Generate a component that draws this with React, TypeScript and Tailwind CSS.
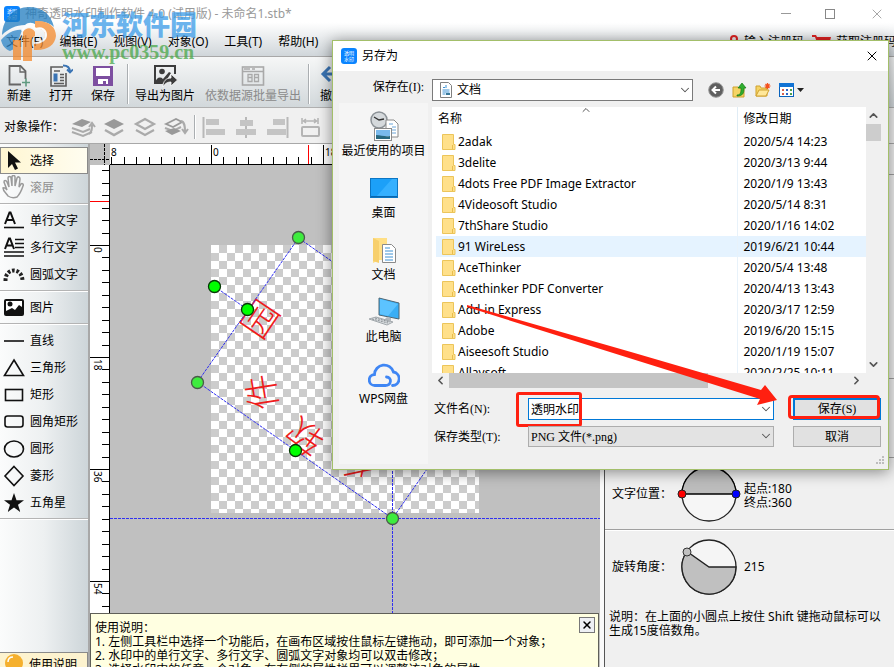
import React, { useState } from 'react';
import { ChevronDown, ChevronLeft, ChevronRight, ChevronUp, X } from 'lucide-react';

const files = [
  { name: '2adak', date: '2020/5/4 14:23' },
  { name: '3delite', date: '2020/3/13 9:44' },
  { name: '4dots Free PDF Image Extractor', date: '2020/1/9 13:43' },
  { name: '4Videosoft Studio', date: '2020/5/14 8:31' },
  { name: '7thShare Studio', date: '2020/1/16 14:02' },
  { name: '91 WireLess', date: '2019/6/21 10:44' },
  { name: 'AceThinker', date: '2020/5/4 13:48' },
  { name: 'Acethinker PDF Converter', date: '2020/4/13 13:43' },
  { name: 'Add-in Express', date: '2020/3/17 12:59' },
  { name: 'Adobe', date: '2019/6/20 15:15' },
  { name: 'Aiseesoft Studio', date: '2020/1/19 15:07' },
  { name: 'Allavsoft', date: '2020/2/25 10:11' },
];

const menus = ['文件(F)', '编辑(E)', '视图(V)', '对象(O)', '工具(T)', '帮助(H)'];

const AppLogo = () => (
  <span className="w-4 h-4 shrink-0 rounded-[3px] bg-[#0a84ff] flex items-center justify-center" aria-hidden="true">
    <svg width="16" height="16" viewBox="0 0 16 16" fill="#fff" fontSize="5" fontFamily="Noto Sans CJK SC, sans-serif">
      <text x="3" y="7">透明</text>
      <text x="3" y="13">水印</text>
    </svg>
  </span>
);

const Folder = () => (
  <svg className="shrink-0" width="14" height="16" viewBox="0 0 14 16">
    <path d="M.5.500h11v10h1.500v5H.5z" fill="#ffe08a" stroke="#ecc55a" />
    <path d="M10.500 15v-4" fill="none" stroke="#e8bd4c" />
  </svg>
);

/* ---------- toolbar ---------- */

const NewIcon = () => (
  <svg width="24" height="24" viewBox="0 0 24 24" fill="none" stroke="#666" strokeWidth="1.800">
    <path d="M14 20.500H2.500V2h11l5 5v8" />
    <path d="M13 2v6h6" strokeWidth="1.300" />
    <path d="M19 14.500v8M15 18.500h8" stroke="#5f9a80" strokeWidth="1.600" />
  </svg>
);

const OpenIcon = () => (
  <svg width="24" height="24" viewBox="0 0 24 24" fill="none" stroke="#5c5c5c" strokeWidth="1.600">
    <path d="M14 3H2v19h15V9" />
    <path d="M5 7h6M11 10.500h4M11 13.500h4M11 16.500h4M5 19.500h10" strokeWidth="1.400" />
    <path d="M4.500 9.500h4v8h-4z" fill="#3a74b4" stroke="none" />
    <path d="M14 1.500c5 0 7 2 7 6.500M18 5.500l3 3 3-3" stroke="#3a74b4" strokeWidth="1.800" />
  </svg>
);

const SaveIcon = () => (
  <svg width="22" height="24" viewBox="0 0 22 24">
    <path d="M1 2h20v20H1z" fill="#7d4fa0" />
    <path d="M4 4h14v8H4zM6 15h10v5H6z" fill="#fff" />
    <path d="M11 17h3v3h-3z" fill="#7d4fa0" />
  </svg>
);

const ExportIcon = () => (
  <svg width="26" height="24" viewBox="0 0 26 24">
    <path d="M10 19H3V2h20v8" fill="none" stroke="#3c3c3c" strokeWidth="2" />
    <circle cx="10" cy="7.500" r="2.800" fill="#3c3c3c" />
    <path d="M3 19c1-5 5-7 8-4l6-7 2 1-7 11z" fill="#3c3c3c" />
    <path d="M11 23c0-6 3-9 8-9v-4l6.500 6-6.500 6v-4c-3 0-6 1-8 5z" fill="#3c3c3c" stroke="#fff" strokeWidth=".8" />
  </svg>
);

const BatchIcon = () => (
  <svg width="24" height="24" viewBox="0 0 24 24" fill="none" stroke="#a9a9a9">
    <rect x="1.500" y="3" width="21" height="18" strokeWidth="1.600" />
    <path d="M2 7.500h20M3 5h6M11 5h3" strokeWidth="1.400" />
    <path d="M7 10.500h4v3H7zM7 13.500h4v4H7zM13.500 10.500h4v3h-4zM13.500 13.500h4v4h-4z" strokeWidth="1.300" />
  </svg>
);

const UndoIcon = () => (
  <svg width="24" height="24" viewBox="0 0 24 24" fill="none" stroke="#3a74b4" strokeWidth="3">
    <path d="M10 3l-7 7 7 7M3 10h19" />
  </svg>
);

const ToolButton = ({ icon, label, disabled }: { icon: React.ReactNode; label: string; disabled?: boolean }) => (
  <button
    disabled={disabled}
    className="flex flex-col items-center shrink-0 whitespace-nowrap leading-4 disabled:text-[#8a8a8a]"
  >
    {icon}
    <span>{label}</span>
  </button>
);

const Divider = ({ className }: { className: string }) => (
  <span className={`w-[2px] shrink-0 bg-[#aaaeb1] border-r border-white ${className}`} />
);

const layerIcons = [
  <g key="a">
    <path d="M2 17l11 4 9-4" fill="none" stroke="#aaa" strokeWidth="2" />
    <path d="M2 13l11 4 7-3" fill="none" stroke="#aaa" strokeWidth="2" />
    <path d="M2 9l10-5 9 3-9 5z" fill="#999" />
    <path d="M19 19c3-2 3-5 3-9M19 12l3-4 3 4" fill="none" stroke="#aaa" strokeWidth="2" />
  </g>,
  <g key="b">
    <path d="M3 9l10-5 10 5-10 5z" fill="#999" />
    <path d="M4 15l9 5 9-5" fill="none" stroke="#aaa" strokeWidth="2.500" />
  </g>,
  <g key="c" fill="none" stroke="#aaa" strokeWidth="2.200">
    <path d="M4 9l9-5 9 5-9 5z" />
    <path d="M4 15l9 5 9-5" />
  </g>,
  <g key="d">
    <path d="M3 9l10-5 6 3-9 5z" fill="none" stroke="#999" strokeWidth="1.800" />
    <path d="M2 13l8 3 8-4" fill="none" stroke="#aaa" strokeWidth="2" />
    <path d="M2 16l9-3 7 3-9 4z" fill="#999" />
    <path d="M18 6c4 1 4 6 4 11M19 14l3 4 3-4" fill="none" stroke="#aaa" strokeWidth="2" />
  </g>,
];

const alignIcons = [
  <g key="a">
    <path d="M2.500 2v21" stroke="#b8b8b8" strokeWidth="2" />
    <path d="M5 4h13v6H5zM5 14h19v6H5z" fill="#c4c4c4" />
  </g>,
  <g key="b">
    <path d="M13 2v21" stroke="#b8b8b8" strokeWidth="2" />
    <path d="M7 5h13v6H7zM3 14h20v6H3z" fill="#c4c4c4" />
  </g>,
  <g key="c">
    <path d="M22.500 2v21" stroke="#b8b8b8" strokeWidth="2" />
    <path d="M8 4h12v6H8zM2 14h19v6H2z" fill="#c4c4c4" />
  </g>,
  <g key="d" fill="none" stroke="#b4b4b4" strokeWidth="1.500">
    <path d="M5 3v6M21 3v6M6 6h14M9 4L6.500 6 9 8M17 4l2.500 2L17 8" />
    <rect x="5" y="12" width="17" height="9" rx="1" strokeWidth="2" />
  </g>,
];

/* ---------- tool box on the left ---------- */

const stroke = { fill: 'none', stroke: '#111', strokeWidth: 1.6 };

const toolGroups = [
  [
    { label: '选择', art: <path d="M7 3v17l4-4 3 6 3-1.500-3-6h6z" fill="#111" /> },
    {
      label: '滚屏',
      art: (
        <path
          d="M7 21c-2-3-5-5-5-8 2-1 3 1 4 2L3 7c0-2 2-2 3 0l2 5L7 3c0-2 3-2 3 0l1 8V2c0-2 3-2 3 0v9l2-8c1-2 3-1 3 1l-1 8 2-3c1-1 3 0 2 2-1 3-3 8-6 11-3 1-6 1-9-1z"
          fill="none"
          stroke="#9a9a9a"
          strokeWidth="1.500"
        />
      ),
    },
  ],
  [
    {
      label: '单行文字',
      art: (
        <g {...stroke}>
          <path d="M4 16L8.500 4.500h1L14 16M6 12h6" strokeWidth="2" />
          <path d="M3 19.500h20" />
        </g>
      ),
    },
    {
      label: '多行文字',
      art: (
        <g {...stroke}>
          <path d="M4 14L8 3.500h1L13 14M6 10.500h5" strokeWidth="2" />
          <path d="M14 4.500h9M14 8.500h9M14 12.500h9M3 17h20M3 21h20" />
        </g>
      ),
    },
    {
      label: '圆弧文字',
      art: (
        <path
          d="M4.500 19C4 5 21.500 5 21.500 19"
          fill="none"
          stroke="#222"
          strokeWidth="4"
          strokeDasharray="2.600 1.800"
        />
      ),
    },
  ],
  [
    {
      label: '图片',
      art: (
        <g>
          <rect x="3" y="4" width="20" height="17" rx="2" fill="#111" />
          <path d="M5 6h16v6l-3-2-4 5-3-2-6 3z" fill="#fff" />
          <circle cx="9" cy="9" r="2.500" fill="#111" />
        </g>
      ),
    },
  ],
  [
    { label: '直线', art: <path d="M3 13h20" {...stroke} /> },
    { label: '三角形', art: <path d="M13 5l9.500 15.500h-19z" {...stroke} /> },
    { label: '矩形', art: <rect x="4.500" y="7.500" width="17" height="11" {...stroke} /> },
    { label: '圆角矩形', art: <rect x="4" y="7" width="18" height="11" rx="2.500" {...stroke} /> },
    { label: '圆形', art: <ellipse cx="13" cy="13" rx="9.500" ry="8" {...stroke} /> },
    { label: '菱形', art: <path d="M13 3.500l9 9.500-9 9.500L4 13z" {...stroke} /> },
    {
      label: '五角星',
      art: <path d="M13 3l2.500 7.200H23l-6 4.500 2.300 7.300L13 17.500 6.700 22 9 14.700 3 10.200h7.500z" fill="#111" />,
    },
  ],
];

const ToolBox = () => (
  <nav className="w-[88px] shrink-0 flex flex-col bg-gradient-to-r from-[#fbfcfc] via-[#edf0f1] to-[#cdd5d9] pt-[3px]">
    {toolGroups.map((group, i) => (
      <div key={i} className={i ? 'mt-[2px] border-t border-[#b4b4b4]' : ''}>
        <div className={i ? 'border-t border-white pt-[2px] flex flex-col' : 'flex flex-col'}>
          {group.map((tool) => (
            <button
              key={tool.label}
              className={`h-[27px] w-full flex items-center gap-1 text-left border ${
                tool.label === '选择' ? 'bg-gradient-to-r from-[#fff6d2] to-[#fffdf0] border-[#8a8a8a]' : 'border-transparent'
              } ${tool.label === '滚屏' ? 'text-[#8f8f8f]' : ''}`}
            >
              <svg width="25" height="25" viewBox="0 0 25 25" className="shrink-0">
                {tool.art}
              </svg>
              {tool.label}
            </button>
          ))}
        </div>
      </div>
    ))}
    <div className="mt-[2px] border-t border-[#b4b4b4]">
      <div className="border-t border-white" />
    </div>
    <button className="mt-auto h-[15px] overflow-hidden shrink-0 flex items-start gap-1 bg-[#fdf3cf] border-t border-r border-[#8a8a8a]">
      <svg width="25" height="25" viewBox="0 0 25 25" className="shrink-0">
        <circle cx="14" cy="10" r="9" fill="#f5b02e" />
        <path d="M8 9c0-3 2-5 5-5" fill="none" stroke="#fff" strokeWidth="1.500" />
      </svg>
      <span className="pt-1 leading-4">使用说明</span>
    </button>
  </nav>
);

/* ---------- rulers and canvas ---------- */

const STEP = 112 / 9;
const range = (n: number) => Array.from({ length: n }, (_, i) => i);

const HorizontalRuler = () => (
  <svg className="flex-1 h-full bg-white" aria-hidden="true" shapeRendering="crispEdges">
    {range(41).map((i) => {
      const x = Math.round(102 + (i - 8) * STEP);
      const major = (i - 8) % 9 === 0;
      return <path key={i} d={`M${x - 0.5} ${major ? 1 : 13}V20`} stroke="#000" />;
    })}
    <path d="M0 20.500h490" stroke="#000" />
    <path d="M198.500 1v19" stroke="#f00" />
    <g fontSize="10" fontFamily="Noto Sans, sans-serif">
      <text x="1" y="12">8</text>
      <text x="103" y="12">0</text>
      <text x="215" y="12">18</text>
    </g>
  </svg>
);

const VerticalRuler = () => (
  <svg className="w-5 h-full shrink-0 bg-white" aria-hidden="true" shapeRendering="crispEdges">
    {range(38).map((i) => {
      const y = Math.round(81 + (i - 6) * STEP);
      const major = (i - 6) % 9 === 0;
      return <path key={i} d={`M${major ? 0 : 12} ${y - 0.5}H19`} stroke="#000" />;
    })}
    <path d="M19.500 0v600" stroke="#000" />
    <path d="M0 36.500h19" stroke="#f00" />
    <g fontSize="10" fontFamily="Noto Sans, sans-serif">
      <text transform="translate(4 82) rotate(90)">0</text>
      <text transform="translate(4 194) rotate(90)">18</text>
      <text transform="translate(4 306) rotate(90)">36</text>
      <text transform="translate(4 418) rotate(90)">54</text>
    </g>
  </svg>
);

const glyphs = [
  { ch: '园', x: 150, y: 154, angle: -56 },
  { ch: '件', x: 152, y: 227, angle: -99 },
  { ch: '软', x: 195, y: 272, angle: -144 },
  { ch: '东', x: 246, y: 296, angle: -192 },
];

const Canvas = () => (
  <svg className="flex-1 h-full bg-[#c0c0c0]" role="img" aria-label="水印画布">
    <defs>
      <pattern id="checker" x="101" y="80" width="16" height="16" patternUnits="userSpaceOnUse">
        <path d="M0 0h16v16H0z" fill="#ccc" />
        <path d="M0 0h8v8H0zM8 8h8v8H8z" fill="#fff" />
      </pattern>
    </defs>
    <rect x="101" y="80" width="268" height="268" fill="url(#checker)" />
    <g fill="#ee1c1c" fontSize="36" fontWeight="300" fontFamily="Noto Sans CJK SC, sans-serif" textAnchor="middle">
      {glyphs.map((g) => (
        <text key={g.ch} transform={`translate(${g.x} ${g.y}) rotate(${g.angle})`} y="13">
          {g.ch}
        </text>
      ))}
    </g>
    <g stroke="#3030f0" fill="none" strokeDasharray="3 1">
      <path d="M188.500 73L87.500 217l195 136.500 101-144.500zM104.500 121.500l33 23" />
      <path d="M0 353.500h490M282.500 270v300" />
    </g>
    <g fill="#3eec3e" stroke="#4a5a4a" strokeWidth="1.300">
      <circle cx="188.500" cy="72.500" r="6" />
      <circle cx="87.500" cy="217.500" r="6" />
      <circle cx="282.500" cy="353.500" r="6" />
    </g>
    <g fill="#0f0" stroke="#063806" strokeWidth="1.300">
      <circle cx="104.500" cy="121.500" r="6" />
      <circle cx="137.500" cy="144.500" r="6" />
      <circle cx="185.500" cy="285.500" r="6" />
    </g>
  </svg>
);

const HelpPanel = () => (
  <section className="h-[54px] mr-px shrink-0 overflow-hidden flex items-start justify-between bg-[#ffffe1] border border-b-0 border-[#5f5f58] pl-1 pr-[3px] pt-[3px]">
    <div className="pt-1 leading-[14px] whitespace-nowrap">
      <p>使用说明：</p>
      <p>1. 左侧工具栏中选择一个功能后，在画布区域按住鼠标左键拖动，即可添加一个对象；</p>
      <p>2. 水印中的单行文字、多行文字、圆弧文字对象均可以双击修改；</p>
      <p>3. 选择水印中的任意一个对象，在右侧的属性栏里可以调整该对象的属性。</p>
    </div>
    <button aria-label="关闭" className="w-4 h-4 shrink-0 flex items-center justify-center border border-[#777] bg-[#eef0f4]">
      <X size={12} strokeWidth={3} />
    </button>
  </section>
);

const PropertyPanel = () => (
  <aside className="flex-1 min-w-0 border-l border-[#555] bg-[#f0f0f0] pt-[30px]">
    <div className="h-[205px] border-y border-[#a0a0a0]" />
    <div className="h-[79px] border-b border-[#a0a0a0]" />
    <div className="h-[72px] border-b border-[#a0a0a0] flex items-center">
      <span className="w-16 ml-[7px] whitespace-nowrap">文字位置：</span>
      <svg width="68" height="60" viewBox="-4 0 68 60">
        <circle cx="29" cy="30" r="27" fill="#fff" fillOpacity=".4" stroke="#222" strokeWidth="1.300" />
        <path d="M2 30a27 27 0 0 1 54 0z" fill="#bcbcbc" stroke="#000" strokeWidth="1.300" />
        <circle cx="2" cy="30" r="4" fill="#f00" stroke="#222" />
        <circle cx="56" cy="30" r="4" fill="#00f" stroke="#222" />
      </svg>
      <p className="pt-1 leading-[14px]">
        起点:180
        <br />
        终点:360
      </p>
    </div>
    <div className="h-[73px] border-t border-white flex items-center">
      <span className="w-16 ml-[7px] whitespace-nowrap">旋转角度：</span>
      <svg width="68" height="60" viewBox="-4 0 68 60">
        <circle cx="29" cy="30" r="27" fill="#f5f5f5" stroke="#222" strokeWidth="1.300" />
        <path d="M29 30h27A27 27 0 1 1 6.900 14.500z" fill="#c0c0c0" stroke="#222" strokeWidth="1.300" />
        <circle cx="7" cy="15" r="4" fill="#c0c0c0" stroke="#333" />
      </svg>
      <span>215</span>
    </div>
    <p className="mt-1 ml-1 mr-2 pt-[3px] leading-[14px]">说明：在上面的小圆点上按住 Shift 键拖动鼠标可以生成15度倍数角。</p>
  </aside>
);

/* ---------- save dialog ---------- */

const places = [
  {
    label: '最近使用的项目',
    art: (
      <g>
        <circle cx="11" cy="9" r="8" fill="#d5d9dc" stroke="#8b9196" strokeWidth="1.500" />
        <path d="M6 6l5 3 5-1" fill="none" stroke="#333" strokeWidth="1.300" />
        <path d="M18 9h8l4 4v13H18z" fill="#fff" stroke="#8a8a8a" />
        <path d="M21 13h4M24 16h4M24 19h4M24 22h4" stroke="#6aa5d8" />
        <rect x="6.500" y="17.500" width="17" height="12" fill="#fff" stroke="#8a8a8a" />
        <path d="M8 19h14v6H8z" fill="#79b9ec" />
        <path d="M8 28v-4c5 0 9 2 14 1v3z" fill="#27677e" />
      </g>
    ),
  },
  {
    label: '桌面',
    art: (
      <g>
        <rect x="2.500" y="5.500" width="27" height="19" fill="#1ca0f8" stroke="#0b76c4" />
        <path d="M8 24L24 6h5v18z" fill="#35b0ff" />
        <path d="M3 23.500h26" stroke="#0a66ad" />
      </g>
    ),
  },
  {
    label: '文档',
    art: (
      <g>
        <path d="M5 3h14v22H11l-6 3z" fill="#ffdf85" />
        <path d="M5 3l6 3v22l-6-2z" fill="#f7cf6c" />
        <path d="M14.500 9.500h9l4 4v14h-13z" fill="#fff" stroke="#8a8a8a" />
        <path d="M17 13h5M17 16h8M17 19h8M17 22h8M17 25h8" stroke="#3e92d3" />
      </g>
    ),
  },
  {
    label: '此电脑',
    art: (
      <g>
        <path d="M11 1l20 5v16l-20-4z" fill="#39aef5" stroke="#4f6673" />
        <path d="M12 2l18 5-10 12-8-2z" fill="#5cc3ff" />
        <path d="M19 20l4 1v3l-7-1z" fill="#b4babe" />
        <path d="M1 22l7-2 17 5-6 3z" fill="#d9dde0" stroke="#a2a8ac" />
        <path d="M4 22l16 4M7 21l15 4" stroke="#8c9296" strokeDasharray="2 1" />
      </g>
    ),
  },
  {
    label: 'WPS网盘',
    art: (
      <g fill="none" stroke="#3f86f4" strokeWidth="2.800" strokeLinecap="round">
        <path d="M17 26.500H7a5.500 5.500 0 0 1-.5-11A9.700 9.700 0 0 1 25.500 13a6.800 6.800 0 0 1-1 13.500" />
        <path d="M17 26.500c7 0 7-8.500 1.500-8.500" />
      </g>
    ),
  },
];

const simsun = 'font-["Liberation_Serif","Noto_Sans_CJK_SC",serif]';

const SaveDialog = () => {
  const [fileName, setFileName] = useState('透明水印');

  return (
    <div
      role="dialog"
      aria-labelledby="dialog-title"
      className="absolute left-[332px] right-[5px] top-[40px] border border-[#a3bf6a] bg-[#f0f0f0] shadow-[0_2px_14px_rgba(0,0,0,0.45)]"
    >
      <header className="h-[30px] bg-white flex items-center gap-[5px] pl-2 pr-2">
        <AppLogo />
        <h2 id="dialog-title" className="flex-1">另存为</h2>
        <button aria-label="关闭对话框">
          <X size={16} strokeWidth={1.5} />
        </button>
      </header>

      <div className="flex gap-1 pl-[6px] pr-[7px] pb-[5px]">
        <div className="w-[89px] shrink-0 flex flex-col">
          <label htmlFor="folder" className={`h-8 flex items-center justify-end pr-1 ${simsun}`}>
            保存在(I):
          </label>
          <div className="flex-1 bg-[#f5f5f5] pt-2 flex flex-col gap-[14px]">
            {places.map((place) => (
              <button key={place.label} className="flex flex-col items-center leading-4 whitespace-nowrap">
                <svg width="32" height="32" viewBox="0 0 32 32">{place.art}</svg>
                <span>{place.label}</span>
              </button>
            ))}
          </div>
        </div>

        <div className="flex-1 min-w-0">
          <div className="h-9 flex items-start pt-2">
            <div className="relative w-[261px]">
              <select
                id="folder"
                className="appearance-none w-full h-[22px] pl-6 bg-white border border-[#7a7a7a] leading-4"
              >
                <option>文档</option>
              </select>
              <svg className="absolute left-[7px] top-[3px] pointer-events-none" width="14" height="16" viewBox="0 0 14 16">
                <path d="M1.500.500h8l3 3v12h-11z" fill="#fff" stroke="#808080" />
                <path d="M4 5.500h2M7 3v3M3.500 8h7M3.500 10h7M3.500 12h3" fill="none" stroke="#3e92d3" />
                <path d="M7 11h4v2H7z" fill="#3a7a9a" />
              </svg>
              <ChevronDown className="absolute right-[1px] top-1 pointer-events-none text-[#555]" size={14} strokeWidth={1.8} />
            </div>
            <div className="flex items-center gap-2 pl-[15px] h-[22px]">
              <button aria-label="后退">
                <svg width="16" height="16" viewBox="0 0 16 16">
                  <circle cx="8" cy="8" r="7.300" fill="#5f5f5f" stroke="#9a9a9a" />
                  <path d="M12 8H5M8 4.500L4.500 8 8 11.500" fill="none" stroke="#fff" strokeWidth="2" />
                </svg>
              </button>
              <button aria-label="向上一级">
                <svg width="15" height="16" viewBox="0 0 15 16">
                  <path d="M1 5h5l1 1h5v9H1z" fill="#f5d465" stroke="#d0a12e" />
                  <path d="M5 13c4 0 4-3 4-7H6l4-5 4 5h-2c0 5-1 8-7 8z" fill="#2fae2f" stroke="#157a15" strokeWidth=".7" />
                </svg>
              </button>
              <button aria-label="新建文件夹">
                <svg width="16" height="16" viewBox="0 0 16 16">
                  <path d="M1 14V4h4l1 2h6v8z" fill="#f5d465" stroke="#d0a12e" />
                  <path d="M1 14l3-6h10l-3 6z" fill="#ffe89a" stroke="#d0a12e" />
                  <path d="M12.500 1v6M9.500 4h6M10.500 2l4 4M14.500 2l-4 4" stroke="#f4511e" strokeWidth="1.200" />
                </svg>
              </button>
              <button aria-label="查看方式">
                <svg width="25" height="16" viewBox="0 0 25 16">
                  <rect x=".5" y="1.500" width="14" height="13" fill="#fff" stroke="#0a63bd" />
                  <path d="M0 1h15v4H0z" fill="#1173d4" />
                  <path d="M3 7h2v2H3zM3 11h2v2H3z" fill="#d9604c" />
                  <path d="M7 7h2v2H7zM7 11h2v2H7z" fill="#2c66c8" />
                  <path d="M11 7h2v2h-2zM11 11h2v2h-2z" fill="#4ca04c" />
                  <path d="M18 6h7l-3.500 4z" fill="#222" />
                </svg>
              </button>
            </div>
          </div>

          <div className="flex h-[266px]">
            <div className="relative flex-1 min-w-0 overflow-hidden bg-white pl-1">
              <ChevronUp className="absolute left-[148px] top-[-3px] text-[#555]" size={12} strokeWidth={2} />
              <table className="w-full table-fixed border-collapse">
                <thead>
                  <tr className="h-6 text-left">
                    <th className="font-normal p-0 pl-[2px]">名称</th>
                    <th className="font-normal p-0 pl-[6px] w-[129px] border-l border-[#e0ecf5]">修改日期</th>
                  </tr>
                </thead>
                <tbody>
                  {files.map((file) => (
                    <tr key={file.name} className={file.name === '91 WireLess' ? 'h-[21px] bg-[#e5f3ff]' : 'h-[21px]'}>
                      <td className="p-0 pl-[6px]">
                        <div className="flex items-center gap-[2px] h-[21px] whitespace-nowrap">
                          <Folder />
                          {file.name}
                        </div>
                      </td>
                      <td className="p-0 pl-[6px] border-l border-[#e8f2fa] whitespace-nowrap">{file.date}</td>
                    </tr>
                  ))}
                </tbody>
              </table>
            </div>
            <div className="w-[15px] shrink-0 flex flex-col items-center text-[#555]">
              <ChevronUp className="my-[2px]" size={13} strokeWidth={3} />
              <div className="w-full h-[17px] bg-[#cdcdcd]" />
              <ChevronDown className="mt-auto mb-[2px]" size={13} strokeWidth={3} />
            </div>
          </div>
          <div className="flex items-center h-[15px] pr-[18px] text-[#555]">
            <ChevronLeft className="mx-[2px]" size={13} strokeWidth={3} />
            <div className="w-[259px] h-full bg-[#c4c4c4]" />
            <ChevronRight className="ml-auto" size={13} strokeWidth={3} />
          </div>

          <div className={`mt-[10px] flex flex-col gap-[6px] ${simsun}`}>
            <div className="flex items-center">
              <label htmlFor="file-name" className="w-24 pl-[2px]">文件名(N):</label>
              <div className="relative w-[246px]">
                <input
                  id="file-name"
                  value={fileName}
                  onChange={(e) => setFileName(e.target.value)}
                  className="w-full h-[22px] px-[2px] bg-white border border-[#0078d7] outline-none"
                />
                <ChevronDown className="absolute right-[1px] top-1 text-[#555]" size={14} strokeWidth={1.8} />
                {/* red frame round the name */}
                <span className="absolute -left-3 -top-[6px] w-[66px] h-[35px] rounded-[3px] border-[3px] border-[#ff2010] pointer-events-none" />
              </div>
              <div className="relative ml-auto w-[88px]">
                <button className="w-full h-[22px] bg-[#e1e1e1] border-2 border-[#0078d7]">保存(S)</button>
                <span className="absolute -left-[5px] -top-[3px] w-[92px] h-6 rounded-[4px] border-[3px] border-[#ff2010] pointer-events-none" />
              </div>
            </div>
            <div className="flex items-center">
              <label htmlFor="file-type" className="w-24 pl-[2px]">保存类型(T):</label>
              <div className="relative w-[246px]">
                <select
                  id="file-type"
                  className="appearance-none w-full h-[21px] pl-[2px] bg-[#e3e3e3] border border-[#adadad]"
                >
                  <option>PNG 文件(*.png)</option>
                </select>
                <ChevronDown className="absolute right-[1px] top-[3px] pointer-events-none text-[#555]" size={14} strokeWidth={1.8} />
              </div>
              <button className="ml-auto w-[88px] h-[21px] bg-[#e1e1e1] border border-[#adadad]">取消</button>
            </div>
          </div>
          <svg className="ml-auto mt-[7px] -mr-1" width="10" height="10" viewBox="0 0 10 10" fill="#bdbdbd">
            <path d="M7 2h2v2H7zM4 5h2v2H4zM7 5h2v2H7zM1 8h2v2H1zM4 8h2v2H4zM7 8h2v2H7z" />
          </svg>
        </div>
      </div>

      {/* pointer from the list to the save button */}
      <svg className="absolute left-[130px] top-[260px] pointer-events-none" width="320" height="110" viewBox="0 0 320 110">
        <path d="M4 4L168 51 298 89 302 84 314 99 294 104 297 98 166 57 4 6z" fill="#ff2010" />
      </svg>
    </div>
  );
};

const Watermark = () => (
  <div className="absolute left-0 top-0 w-[204px] h-16 pointer-events-none opacity-75">
    <svg className="absolute left-0 top-[4px]" width="60" height="60" viewBox="0 0 60 60">
      <path d="M2 31C3 14 14 3 29 3c13 0 22 7 25 20-4-4-10-6-16-5l-2 3c-3-3-8-3-11 0-9 0-17 4-23 10z" fill="#1f7cc0" />
      <path d="M1 36c6-7 14-11 21-10l-6 18-6 3C5 45 2 41 1 36z" fill="#2d86c9" />
      <path d="M13 36h8v20h-8zM23 28c3-5 9-5 12 0v4l-3 2v23h-9z" fill="#f58a2c" />
      <path d="M35 17c14-1 21 6 21 15-1 9-9 15-22 14v-8c7 0 11-2 11-7s-4-7-10-6z" fill="#f58a2c" />
      <path d="M22 27c3-6 9-7 14-2 6-2 10 1 10 6s-5 8-12 8" fill="none" stroke="#fff" strokeWidth="2" />
    </svg>
    <div className="absolute left-[62px] top-[9px] text-[27px] leading-8 font-black text-[#3a9be8] whitespace-nowrap">河东软件园</div>
    <div className='absolute left-[62px] top-[40px] text-[20px] leading-6 font-bold text-[#4aa84a] font-["Liberation_Serif",serif]'>
      www.pc0359.cn
    </div>
  </div>
);

const App: React.FC = () => (
  <div className='relative h-screen overflow-hidden flex flex-col bg-[#f0f0f0] text-black text-[12px] font-["Noto_Sans","Noto_Sans_CJK_SC",sans-serif]'>
    <div className="shrink-0 border-b border-[#a8a8a8] bg-gradient-to-b from-white from-40% to-[#d0d6da]">
      <div className="h-[27px] flex items-center pl-1 gap-[5px] text-[#999]">
        <AppLogo />
        <h1 className="flex-1 whitespace-nowrap">神奇透明水印制作软件 4.0 (试用版) - 未命名1.stb*</h1>
        <div className="flex items-center gap-[34px] pr-[9px]">
          <button aria-label="最小化" className="w-[10px] h-3 flex items-center">
            <span className="w-[10px] h-px bg-[#999]" />
          </button>
          <button aria-label="最大化" className="w-[10px] h-[10px] border border-[#888]" />
          <button aria-label="关闭窗口">
            <X size={16} strokeWidth={1.3} />
          </button>
        </div>
      </div>
      <div className="h-[29px] flex items-center justify-between overflow-hidden whitespace-nowrap">
        <div className="flex gap-4 pl-[6px]">
          {menus.map((menu) => (
            <button key={menu}>{menu}</button>
          ))}
        </div>
        <div className="flex -mr-[2px]">
          <a href="#register" className="flex items-center gap-1">
            <svg width="12" height="14" viewBox="0 0 12 14">
              <circle cx="6" cy="4" r="3" fill="none" stroke="#d22" strokeWidth="2" />
              <path d="M5 7h2v6H5z" fill="#d22" />
            </svg>
            输入注册码
          </a>
          <a href="#buy" className="flex items-center gap-1 pl-2">
            <svg width="20" height="14" viewBox="0 0 20 14" fill="#d22">
              <path d="M0 0h4l1 2h14l-2 8H6L3 2H0z" />
            </svg>
            获取注册码
          </a>
        </div>
      </div>
    </div>

    <div className="h-[51px] shrink-0 overflow-hidden flex items-start pl-[7px] pt-[7px] border-b border-[#b0b0b0] bg-gradient-to-b from-[#f6f7f7] to-[#d2d8db]">
      <div className="flex gap-[18px]">
        <ToolButton icon={<NewIcon />} label="新建" />
        <ToolButton icon={<OpenIcon />} label="打开" />
        <ToolButton icon={<SaveIcon />} label="保存" />
      </div>
      <Divider className="h-10 ml-3 mr-[6px]" />
      <div className="flex gap-[10px]">
        <ToolButton icon={<ExportIcon />} label="导出为图片" />
        <ToolButton icon={<BatchIcon />} label="依数据源批量导出" disabled />
      </div>
      <Divider className="h-10 ml-[7px] mr-[10px]" />
      <ToolButton icon={<UndoIcon />} label="撤销" />
    </div>

    <div className="h-9 shrink-0 overflow-hidden flex items-center pl-1 pt-[3px] border-b border-[#a8a8a8]">
      <span className="w-[66px] shrink-0 whitespace-nowrap">对象操作：</span>
      <div className="flex gap-[5px]">
        {layerIcons.map((icon, i) => (
          <button key={i} aria-label={`图层 ${i + 1}`}>
            <svg width="26" height="24" viewBox="0 0 26 24">{icon}</svg>
          </button>
        ))}
      </div>
      <Divider className="h-6 mx-[5px]" />
      <div className="flex gap-[6px]">
        {alignIcons.map((icon, i) => (
          <button key={i} aria-label={`对齐 ${i + 1}`}>
            <svg width="26" height="24" viewBox="0 0 26 24">{icon}</svg>
          </button>
        ))}
      </div>
    </div>

    <div className="flex-1 min-h-0 flex">
      <ToolBox />
      <main className="w-[512px] shrink-0 flex flex-col border-l-2 border-[#a8a8a8] bg-[#c0c0c0]">
        <div className="h-[21px] shrink-0 flex">
          <svg className="w-5 h-full shrink-0 bg-[#c0c0c0]" aria-hidden="true">
            <path d="M0 15.500h20M14.500 0v21" stroke="#000" strokeDasharray="3 1" />
          </svg>
          <HorizontalRuler />
        </div>
        <div className="flex-1 min-h-0 flex">
          <VerticalRuler />
          <Canvas />
        </div>
        <HelpPanel />
      </main>
      <div className="w-1 shrink-0 bg-[#fafafa]" />
      <PropertyPanel />
    </div>

    <Watermark />
    <SaveDialog />
  </div>
);

export default App;
